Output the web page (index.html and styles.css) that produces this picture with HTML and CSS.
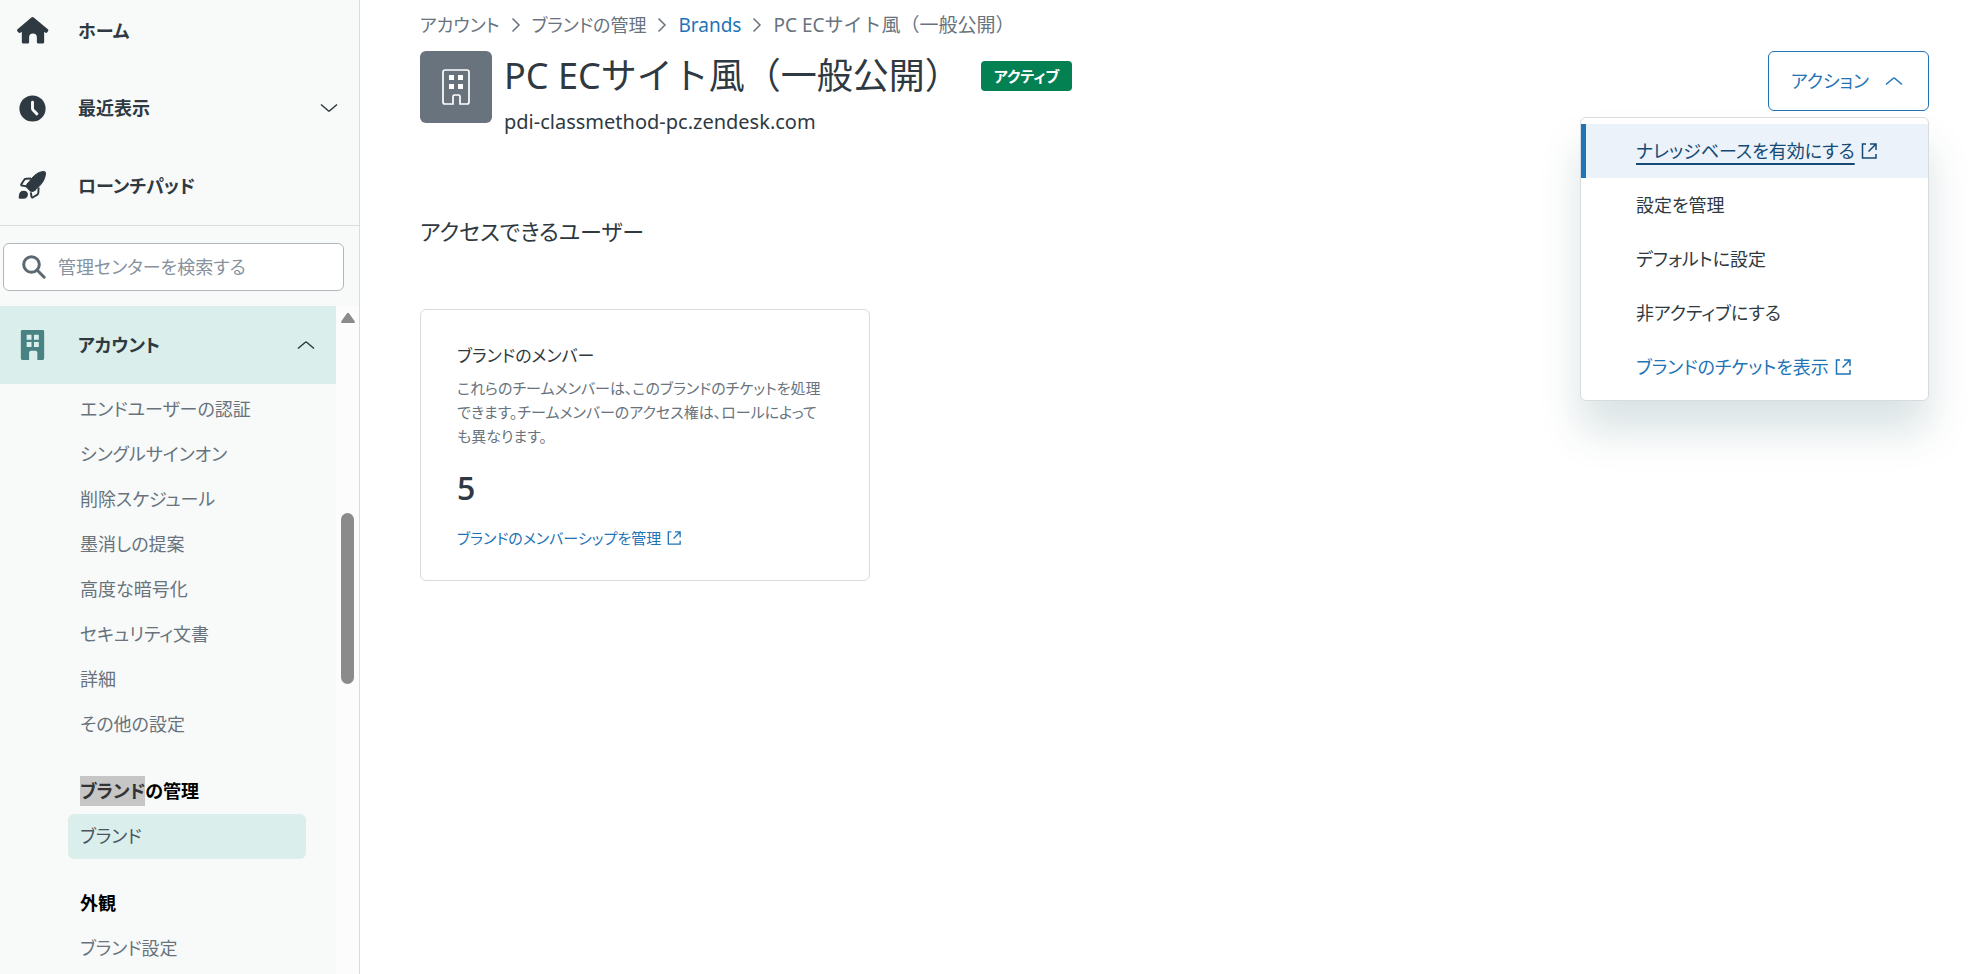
FILE: index.html
```html
<!DOCTYPE html>
<html lang="ja">
<head>
<meta charset="utf-8">
<meta name="viewport" content="width=device-width, initial-scale=1">
<title>PC ECサイト風（一般公開）</title>
<link rel="stylesheet" href="styles.css">
</head>
<body>
<svg class="sprite" aria-hidden="true">
  <symbol id="external" viewBox="0 0 16 16"><path d="M5 1H1.500v14H15v-4M9 1h6v6M15 1 7.500 8.500" fill="none" stroke="currentColor" stroke-width="1.500"/></symbol>
  <symbol id="chevron-up" viewBox="0 0 18 18"><path d="m1 12.500 7.300-6.200a1 1 0 0 1 1.400 0l7.300 6.200" fill="none" stroke="currentColor" stroke-width="1.500"/></symbol>
  <symbol id="chevron-down" viewBox="0 0 18 18"><path d="m1 5.500 7.300 6.200a1 1 0 0 0 1.400 0L17 5.500" fill="none" stroke="currentColor" stroke-width="1.500"/></symbol>
  <symbol id="chevron-right" viewBox="0 0 10 16"><path d="m1.500 1.500 6.500 6.500-6.500 6.500" fill="none" stroke="currentColor" stroke-width="1.500"/></symbol>
</svg>
<div class="app">
  <aside class="sidebar">
    <nav class="shortcuts">
      <a class="shortcut" href="#">
        <svg class="nav-icon" viewBox="0 0 34 34"><path d="M15.800 3.700a2 2 0 0 1 2.500 0l14.500 12c.7.600.8 1.500.2 2.200l-.8 1c-.6.700-1.400.800-2.200.2l-1-.7v10.600a1.500 1.500 0 0 1-1.500 1.500h-4.500a1.500 1.500 0 0 1-1.500-1.500v-5a4 4 0 0 0-8 0v5a1.500 1.500 0 0 1-1.500 1.500H7.500A1.500 1.500 0 0 1 6 29V18.400l-1.500.9c-.8.500-1.600.3-2.100-.4l-1-1.200c-.5-.7-.4-1.500.2-2z" fill="currentColor"/></svg>
        <span>ホーム</span>
      </a>
      <button class="shortcut" type="button">
        <svg class="nav-icon" viewBox="0 0 34 34"><circle cx="17" cy="17" r="13.500" fill="currentColor"/><path d="M17 10.500v6.500c0 .8.200 1.300.8 1.900l3.700 3.600" fill="none" stroke="#f8faf9" stroke-width="3" stroke-linecap="round"/></svg>
        <span>最近表示</span>
        <svg class="chevron"><use href="#chevron-down"/></svg>
      </button>
      <a class="shortcut" href="#">
        <svg class="nav-icon" viewBox="0 0 34 34"><path d="M28.500 1.500c1.500 0 2 .5 2 2C30 9 27 14.500 21.500 19L19 21l-7-7 2-2.500C18.500 5 23 2 28.500 1.500z" fill="currentColor" stroke="currentColor" stroke-linejoin="round"/><path d="m15.500 8.800-5.200.2c-.8 0-1.400.3-1.800 1l-3 4.700c-.4.600-.1 1.200.5 1.300l5 .9" fill="none" stroke="currentColor" stroke-width="2" stroke-linejoin="round"/><path d="m23.300 18-.3 5.500c0 .8-.3 1.400-1 1.800l-4.500 2.800c-.8.400-1.500.1-1.600-.8l-.6-4.300" fill="none" stroke="currentColor" stroke-width="2" stroke-linejoin="round"/><path d="m12.500 12.500 8.500 8-3.500 2.200-2.700-.2-4.800-5 .2-2z" fill="currentColor"/><path d="M3 26.500c0-3.300 2-5.200 5-5.200 2.700 0 4.300 1.500 4.300 4 0 2.700-1.800 4.400-4.800 4.400H4c-1 0-1.300-.5-1.200-1.500z" fill="currentColor"/></svg>
        <span>ローンチパッド</span>
      </a>
    </nav>
    <form class="search" role="search">
      <svg class="search-icon" viewBox="0 0 24 24"><circle cx="9.500" cy="9.500" r="7.800" fill="none" stroke="currentColor" stroke-width="3"/><path d="m15 15 7.200 7.200" stroke="currentColor" stroke-width="3" stroke-linecap="round"/></svg>
      <input class="search-input" type="text" placeholder="管理センターを検索する" aria-label="管理センターを検索する">
    </form>
    <div class="tree">
      <nav class="tree-content">
        <button class="section" type="button" aria-expanded="true">
          <svg class="nav-icon section-icon" viewBox="0 0 34 34"><path fill-rule="evenodd" d="M6.500 1h21A1.500 1.500 0 0 1 29 2.500v28a1.500 1.500 0 0 1-1.500 1.500H22v-7.500a2 2 0 0 0-2-2h-4.500a2 2 0 0 0-2 2V32h-7A1.500 1.500 0 0 1 5 30.500v-28A1.500 1.500 0 0 1 6.500 1zM11 6v5h5V6zm7.500 0v5h5V6zM11 13.500v5h5v-5zm7.500 0v5h5v-5z" fill="currentColor"/></svg>
          <span>アカウント</span>
          <svg class="chevron"><use href="#chevron-up"/></svg>
        </button>
        <ul class="links">
          <li><a href="#">エンドユーザーの認証</a></li>
          <li><a href="#">シングルサインオン</a></li>
          <li><a href="#">削除スケジュール</a></li>
          <li><a href="#">墨消しの提案</a></li>
          <li><a href="#">高度な暗号化</a></li>
          <li><a href="#">セキュリティ文書</a></li>
          <li><a href="#">詳細</a></li>
          <li><a href="#">その他の設定</a></li>
        </ul>
        <h2 class="group"><mark>ブランド</mark>の管理</h2>
        <ul class="links">
          <li><a class="current" href="#" aria-current="page">ブランド</a></li>
        </ul>
        <h2 class="group">外観</h2>
        <ul class="links">
          <li><a href="#">ブランド設定</a></li>
        </ul>
      </nav>
      <div class="scrollbar" aria-hidden="true">
        <svg class="scroll-up" viewBox="0 0 16 12"><path d="M7 1.300a1.300 1.300 0 0 1 2 0l5.700 8c.6.900.1 1.700-1 1.700H2.300c-1.100 0-1.600-.8-1-1.700z" fill="currentColor"/></svg>
        <div class="thumb"></div>
      </div>
    </div>
  </aside>

  <main class="main">
    <nav class="breadcrumb" aria-label="パンくずリスト">
      <span>アカウント</span>
      <svg class="crumb-arrow"><use href="#chevron-right"/></svg>
      <span>ブランドの管理</span>
      <svg class="crumb-arrow"><use href="#chevron-right"/></svg>
      <a href="#">Brands</a>
      <svg class="crumb-arrow"><use href="#chevron-right"/></svg>
      <span class="brand-name">PC ECサイト風（一般公開）</span>
    </nav>
    <header class="header">
      <div class="logo">
        <svg viewBox="0 0 28 36"><path d="M3 1h22a2 2 0 0 1 2 2v30a2 2 0 0 1-2 2h-7v-7.500a1.500 1.500 0 0 0-1.500-1.500h-4a1.500 1.500 0 0 0-1.500 1.500V35H3a2 2 0 0 1-2-2V3a2 2 0 0 1 2-2z" fill="none" stroke="#fff" stroke-width="1.700"/><path d="M7 6h5v5H7zM16 6h5v5h-5zM7 15h5v5H7zM16 15h5v5h-5z" fill="#fff"/></svg>
      </div>
      <div class="identity">
        <div class="title-row">
          <h1 class="title brand-name">PC ECサイト風（一般公開）</h1>
          <span class="badge">アクティブ</span>
        </div>
        <p class="domain">pdi-classmethod-pc.zendesk.com</p>
      </div>
      <div class="actions">
        <button class="action-button" type="button" aria-haspopup="true" aria-expanded="true">
          <span>アクション</span>
          <svg class="chevron"><use href="#chevron-up"/></svg>
        </button>
        <div class="menu">
          <a class="menu-item active" href="#"><span>ナレッジベースを有効にする</span><svg class="external"><use href="#external"/></svg></a>
          <button class="menu-item" type="button">設定を管理</button>
          <button class="menu-item" type="button">デフォルトに設定</button>
          <button class="menu-item" type="button">非アクティブにする</button>
          <a class="menu-item link" href="#"><span>ブランドのチケットを表示</span><svg class="external"><use href="#external"/></svg></a>
        </div>
      </div>
    </header>
    <h2 class="access-heading">アクセスできるユーザー</h2>
    <section class="card">
      <h3 class="card-title">ブランドのメンバー</h3>
      <p class="card-text">これらのチームメンバーは、このブランドのチケットを処理<br>できます。チームメンバーのアクセス権は、ロールによって<br>も異なります。</p>
      <p class="count">5</p>
      <a class="card-link" href="#"><span>ブランドのメンバーシップを管理</span><svg class="external small"><use href="#external"/></svg></a>
    </section>
  </main>
</div>
</body>
</html>
```
FILE: styles.css
```css
* { box-sizing: border-box; }

body {
  margin: 0;
  background: #fff;
  color: #2f3941;
  font-family: "Noto Sans", "Noto Sans CJK JP", sans-serif;
  font-size: 18px;
  line-height: 30px;
  font-feature-settings: "palt";
}

h1, h2, h3, p, ul { margin: 0; padding: 0; }
ul { list-style: none; }
a { color: #1f73b7; text-decoration: none; }

button, input {
  font: inherit;
  font-feature-settings: inherit;
  color: inherit;
  background: none;
  border: 0;
  padding: 0;
}

svg { display: block; flex: none; }
.sprite { position: absolute; width: 0; height: 0; }
.chevron { width: 18px; height: 18px; margin-left: auto; }
.brand-name { font-feature-settings: normal; }

.app { display: flex; height: 100vh; overflow: hidden; }

/* Sidebar */
.sidebar {
  display: flex;
  flex-direction: column;
  flex: none;
  width: 360px;
  background: #f8faf9;
  border-right: 1px solid #d8dcde;
}

.shortcuts { border-bottom: 1px solid #d8dcde; }

.shortcut, .section {
  display: flex;
  align-items: center;
  width: 100%;
  height: 78px;
  padding: 0 21px 0 16px;
  color: #2f3941;
  font-size: 18px;
  font-weight: 600;
}

.shortcut:first-child { height: 69px; padding-bottom: 8px; }
.nav-icon { width: 33px; height: 33px; margin-right: 29px; }

.search {
  display: flex;
  align-items: center;
  flex: none;
  gap: 12px;
  height: 48px;
  margin: 17px 15px 15px 3px;
  padding: 0 18px;
  background: #fff;
  border: 1px solid #b0b7bd;
  border-radius: 6px;
}

.search-icon { width: 24px; height: 24px; color: #5c6970; }
.search-input { flex: 1; min-width: 0; outline: 0; }
.search-input::placeholder { color: #87929d; opacity: 1; }

.tree { display: flex; flex: 1; min-height: 0; }
.tree-content { flex: 1; overflow: hidden; }
.section { margin-bottom: 3px; background: #daeeec; }
.section-icon { color: #498283; }

.links, .group { padding: 0 30px 0 68px; }

.links a {
  display: block;
  height: 45px;
  padding: 0 12px;
  border-radius: 6px;
  color: #68737d;
  line-height: 45px;
}

.links .current { background: #daeeec; color: #49545c; }

.group {
  padding-left: 80px;
  margin-top: 22px;
  color: #000;
  font-size: 18px;
  font-weight: 600;
  line-height: 45px;
}

.group mark { padding: 3px 0; background: #c6c6c6; color: #333; }

.scrollbar {
  display: flex;
  flex-direction: column;
  align-items: center;
  width: 23px;
  background: #fcfcfc;
  color: #8b8b8b;
}

.scroll-up { width: 16px; height: 12px; margin-top: 6px; }
.thumb { width: 13px; height: 171px; margin-top: 189px; border-radius: 7px; background: #8b8b8b; }

/* Main column */
.main { flex: 1; min-width: 0; padding: 10px 57px 0 60px; }

.breadcrumb { display: flex; align-items: center; gap: 11px; color: #68737d; font-size: 19px; }
.crumb-arrow { width: 10px; height: 16px; }
.breadcrumb span:not(.brand-name) { font-size: 18px; }

.header { display: flex; align-items: flex-start; margin-top: 11px; }

.logo {
  display: grid;
  place-items: center;
  width: 72px;
  height: 72px;
  margin-right: 12px;
  background: #68737d;
  border-radius: 6px;
}

.logo svg { width: 28px; height: 36px; }
.title-row { display: flex; align-items: center; gap: 20px; height: 50px; }
.title { font-size: 36px; font-weight: 400; line-height: 50px; }

.badge {
  height: 30px;
  padding: 0 13px;
  border-radius: 4px;
  background: #038153;
  color: #fff;
  font-size: 15px;
  font-weight: 600;
}

.domain { font-size: 20px; line-height: 42px; }

.actions { position: relative; margin-left: auto; }

.action-button {
  display: flex;
  align-items: center;
  gap: 16px;
  height: 60px;
  padding: 0 25px 0 22px;
  border: 1px solid #1f73b7;
  border-radius: 6px;
  color: #1f73b7;
}

.menu {
  position: absolute;
  top: 66px;
  right: 0;
  width: 349px;
  padding: 6px 0;
  background: #fff;
  border: 1px solid #d8dcde;
  border-radius: 6px;
  box-shadow: 0 30px 42px rgba(4, 68, 77, 0.15);
}

.menu-item {
  display: flex;
  align-items: center;
  gap: 6px;
  width: 100%;
  height: 54px;
  padding-left: 50px;
  border-left: 5px solid transparent;
  color: #2f3941;
}

.menu-item.link { color: #1f73b7; }
.menu-item.active { background: #ebf2f9; border-left-color: #1f73b7; color: #144a75; }
.menu-item.active span { text-decoration: underline 2px; text-underline-offset: 5px; }
.external { width: 16px; height: 16px; }
.external.small { width: 14px; height: 14px; }

.access-heading { margin-top: 70px; font-size: 22px; font-weight: 400; line-height: 36px; }

.card {
  width: 450px;
  max-width: 100%;
  margin-top: 60px;
  padding: 30px 36px 27px;
  border: 1px solid #d8dcde;
  border-radius: 6px;
}

.card-title { font-size: 17px; font-weight: 400; line-height: 32px; }
.card-text { margin-top: 4px; color: #68737d; font-size: 15px; line-height: 24px; white-space: nowrap; }
.count { margin-top: 20px; font-family: "Open Sans", sans-serif; font-size: 32px; font-weight: 600; line-height: 40px; }
.card-link { display: flex; align-items: center; gap: 6px; margin-top: 15px; font-size: 15px; line-height: 30px; }
```
